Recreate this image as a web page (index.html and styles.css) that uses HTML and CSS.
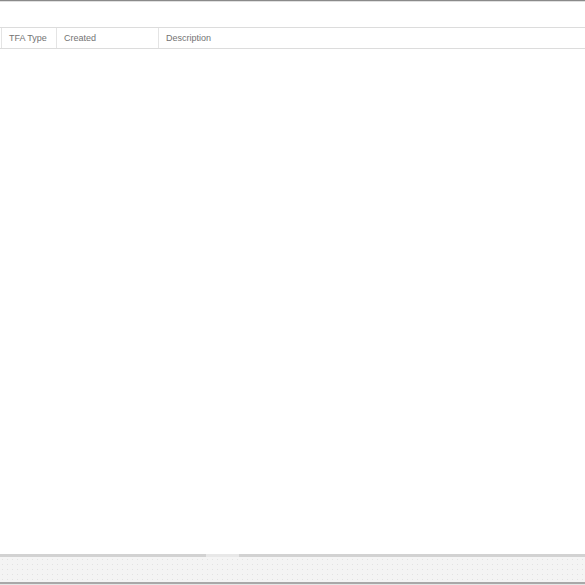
FILE: index.html
```html
<!DOCTYPE html>
<html>
<head>
<meta charset="utf-8">
<link rel="stylesheet" href="styles.css">
</head>
<body>
<div class="app">
  <div class="topbar"></div>
  <div class="main">
    <table class="grid">
      <thead>
        <tr>
          <th class="c0"></th>
          <th class="c1">TFA Type</th>
          <th class="c2">Created</th>
          <th class="c3">Description</th>
        </tr>
      </thead>
    </table>
  </div>
  <div class="splitter"><span class="handle"></span></div>
  <div class="bottom"></div>
  <div class="bottomline"></div>
</div>
</body>
</html>
```
FILE: styles.css
```css
html, body { margin: 0; padding: 0; background: #fff; }
body { font-family: "Liberation Sans", Arial, sans-serif; }
.app { width: 585px; height: 585px; display: flex; flex-direction: column; overflow: hidden; }
.topbar { height: 1px; background: #8a8a8a; border-bottom: 1px solid #e0e0e0; flex: none; }
.main { flex: 1; padding-top: 25px; }
.grid { border-collapse: collapse; width: 100%; table-layout: fixed; }
.grid th { height: 19px; padding: 0 0 1px 7px; text-align: left; font-weight: normal; font-size: 9px; color: #737373;
  border-top: 1px solid #dcdcdc; border-bottom: 1px solid #dcdcdc; border-left: 1px solid #e4e4e4; }
.grid th.c0 { width: 1px; padding: 0; border-left: none; }
.grid th.c1 { width: 47px; }
.grid th.c2 { width: 94px; }
.splitter { height: 3px; background: #d2d2d2; flex: none; display: flex; }
.handle { margin-left: 206px; width: 33px; height: 3px; background: #e8e8e8; }
.bottom { height: 25px; flex: none; background-color: #f4f4f4;
  background-image: radial-gradient(circle, #e2e2e2 0.6px, transparent 0.9px);
  background-size: 5px 5px; }
.bottomline { height: 2px; background: #a8a8a8; border-bottom: 1px solid #e6e6e6; flex: none; }
```
